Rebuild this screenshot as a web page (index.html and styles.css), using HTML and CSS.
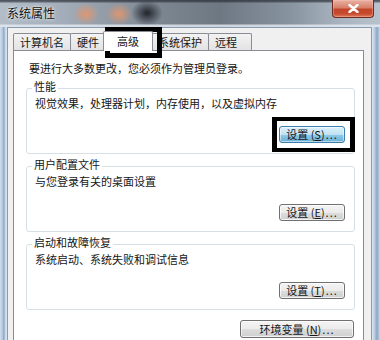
FILE: index.html
```html
<!DOCTYPE html>
<html lang="zh-CN">
<head>
<meta charset="utf-8">
<title>系统属性</title>
<link rel="stylesheet" href="styles.css">
</head>
<body>
<div class="window">
  <div class="titlebar">
    <span class="title">系统属性</span>
    <div class="close">
      <svg width="11" height="9" viewBox="0 0 11 9"><path d="M1.5 1 L9.5 8 M9.5 1 L1.5 8" stroke="#ffffff" stroke-width="2.4" stroke-linecap="round" fill="none"/></svg>
    </div>
  </div>
  <div class="client">
    <div class="tabs">
      <div class="tab">计算机名</div>
      <div class="tab">硬件</div>
      <div class="tab active">高级</div>
      <div class="tab">系统保护</div>
      <div class="tab tab-last">远程</div>
    </div>
    <div class="panel">
      <p class="note">要进行大多数更改，您必须作为管理员登录。</p>
      <div class="group">
        <span class="legend">性能</span>
        <p class="desc">视觉效果，处理器计划，内存使用，以及虚拟内存</p>
        <button class="btn focused">设置 (<u>S</u>)<span class="dots">...</span></button>
      </div>
      <div class="group">
        <span class="legend">用户配置文件</span>
        <p class="desc">与您登录有关的桌面设置</p>
        <button class="btn">设置 (<u>E</u>)<span class="dots">...</span></button>
      </div>
      <div class="group">
        <span class="legend">启动和故障恢复</span>
        <p class="desc">系统启动、系统失败和调试信息</p>
        <button class="btn">设置 (<u>T</u>)<span class="dots">...</span></button>
      </div>
      <button class="btn env">环境变量 (<u>N</u>)<span class="dots">...</span></button>
    </div>
  </div>
  <div class="mark mark-tab"></div>
  <div class="mark mark-btn"></div>
</div>
</body>
</html>
```

FILE: styles.css
```css
* { box-sizing: border-box; }
html, body {
  margin: 0;
  padding: 0;
  width: 380px;
  height: 340px;
  overflow: hidden;
}
body {
  font-family: "Noto Sans CJK SC", "Noto Sans", sans-serif;
  font-size: 11px;
  color: #161616;
}
.window {
  position: relative;
  width: 380px;
  height: 340px;
  display: flex;
  flex-direction: column;
  background: linear-gradient(to right, #d2dfec 0, #aac2da 3px, #7f9ebf 4px, #c6d6e6 5px, #dbe5ef 7px, #dbe5ef 372px, #c3d3e4 374px, #8aa7c6 377px, #c8d7e7 380px);
}
.titlebar {
  height: 27px;
  flex: none;
  display: flex;
  align-items: flex-start;
  padding-left: 7px;
  background:
    linear-gradient(to bottom, rgba(40,44,52,.75) 0, rgba(40,44,52,.55) 2px, rgba(0,0,0,0) 3px, rgba(0,0,0,0) 24px, rgba(230,236,242,.8) 25px, rgba(230,236,242,.8) 27px),
    radial-gradient(ellipse 13px 11px at 86px 14px, rgba(226,150,110,.95), rgba(226,150,110,0)),
    radial-gradient(ellipse 13px 11px at 119px 14px, rgba(226,150,110,.95), rgba(226,150,110,0)),
    radial-gradient(ellipse 16px 13px at 147px 13px, rgba(28,30,38,.95), rgba(28,30,38,0)),
    linear-gradient(to right, #b2bdc8 0, #a3aeba 60px, #7b8590 165px, #6e7883 220px, #8893a0 290px, #a9b4c0 340px, #b7c2cd 380px);
}
.title {
  margin-top: 6px;
  font-size: 12px;
  line-height: 14px;
  color: #101010;
  text-shadow: 0 0 4px rgba(255,255,255,.9), 0 0 2px rgba(255,255,255,.8);
}
.close {
  margin-left: auto;
  margin-right: 6px;
  width: 42px;
  height: 18px;
  display: flex;
  align-items: center;
  justify-content: center;
  border: 1px solid #6e2b20;
  border-top: none;
  border-radius: 0 0 4px 4px;
  background: linear-gradient(to bottom, #e9b2a4 0, #d8806a 45%, #c3452a 55%, #c84a2e 80%, #de7a5c 100%);
  box-shadow: inset 0 0 0 1px rgba(255,200,190,.35);
}
.client {
  flex: 1;
  margin: 0 8px 0 7px;
  background: #f0f0f0;
  border: 1px solid #8a9bb0;
  border-bottom: none;
  padding: 3px 7px 0 5px;
}
.tabs {
  height: 19px;
  display: flex;
  align-items: flex-end;
}
.tab {
  height: 17px;
  display: flex;
  align-items: center;
  padding: 1px 6px 0;
  border: 1px solid #898c95;
  border-bottom: none;
  margin-right: -1px;
  border-radius: 2px 2px 0 0;
  background: linear-gradient(to bottom, #f3f3f3, #e3e3e3);
  line-height: 13px;
}
.tab.active {
  position: relative;
  z-index: 1;
  height: 20px;
  margin: 0 -2px -1px -2px;
  padding: 0 13px;
  background: #ffffff;
}
.tab-last { padding-right: 14px; }
.panel {
  height: 300px;
  border: 1px solid #898c95;
  background: #ffffff;
  padding: 11px 8px 0 12px;
  display: flex;
  flex-direction: column;
}
.note {
  margin: 0 0 13px 3px;
  line-height: 13px;
}
.group {
  display: flex;
  flex-direction: column;
  border: 1px solid #d5dfe5;
  border-radius: 3px;
  padding: 0 9px 10px 8px;
}
.group + .group { margin-top: 12px; }
.legend {
  align-self: flex-start;
  margin: -9px 0 0 -3px;
  padding: 0 2px;
  background: #ffffff;
  line-height: 13px;
}
.desc {
  margin: 4px 0 0;
  line-height: 13px;
}
.btn {
  align-self: flex-end;
  margin-top: 16px;
  width: 66px;
  height: 17px;
  padding: 0;
  font-family: inherit;
  font-size: 11px;
  line-height: 13px;
  color: #161616;
  white-space: nowrap;
  border: 1px solid #707070;
  border-radius: 3px;
  background: linear-gradient(to bottom, #f4f4f4 0, #ebebeb 50%, #dddddd 51%, #cfcfcf 100%);
  box-shadow: inset 0 0 0 1px rgba(255,255,255,.7);
}
.btn u { text-decoration: underline; }
.dots { letter-spacing: 1px; margin-left: 1px; }
.btn.focused {
  border-color: #3c7fb1;
  background: linear-gradient(to bottom, #e0f1fa 0, #bfe2f3 50%, #93cbe8 51%, #6aaed3 100%);
  box-shadow: inset 0 0 0 1px rgba(255,255,255,.5);
}
.btn.env {
  width: 114px;
  height: 18px;
  margin-top: 10px;
  margin-right: 1px;
}
.mark {
  position: absolute;
  border: 5px solid #000000;
  pointer-events: none;
}
.mark-tab {
  left: 105px;
  top: 27px;
  width: 57px;
  height: 31px;
}
.mark-btn {
  left: 272px;
  top: 117px;
  width: 83px;
  height: 35px;
  border-width: 4px 5px;
}
```
